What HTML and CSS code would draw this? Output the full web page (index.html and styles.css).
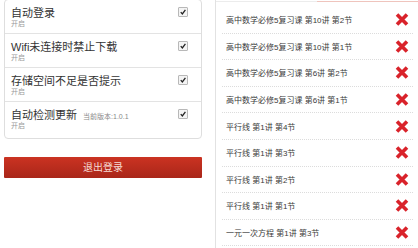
FILE: index.html
```html
<!DOCTYPE html>
<html lang="zh-CN">
<head>
    <meta charset="UTF-8">
    <meta name="viewport" content="width=device-width, initial-scale=1.0">
    <title>设置</title>
    <link rel="stylesheet" href="styles.css">
</head>
<body>

    <div class="page">

        <!-- Einstellungen -->
        <div class="settings">
            <div class="card">
                <div class="row">
                    <div class="row-head">
                        <span class="title">自动登录</span>
                        <span class="check"><svg viewBox="0 0 10 10"><path d="M2.2 5.2 L4.2 7.4 L8 2.4" /></svg></span>
                    </div>
                    <div class="sub">开启</div>
                </div>
                <div class="row">
                    <div class="row-head">
                        <span class="title">Wifi未连接时禁止下载</span>
                        <span class="check"><svg viewBox="0 0 10 10"><path d="M2.2 5.2 L4.2 7.4 L8 2.4" /></svg></span>
                    </div>
                    <div class="sub">开启</div>
                </div>
                <div class="row">
                    <div class="row-head">
                        <span class="title">存储空间不足是否提示</span>
                        <span class="check"><svg viewBox="0 0 10 10"><path d="M2.2 5.2 L4.2 7.4 L8 2.4" /></svg></span>
                    </div>
                    <div class="sub">开启</div>
                </div>
                <div class="row last">
                    <div class="row-head">
                        <span class="title">自动检测更新 <span class="version">当前版本:1.0.1</span></span>
                        <span class="check"><svg viewBox="0 0 10 10"><path d="M2.2 5.2 L4.2 7.4 L8 2.4" /></svg></span>
                    </div>
                    <div class="sub">开启</div>
                </div>
            </div>

            <div class="logout">退出登录</div>
        </div>

        <!-- Download-Liste -->
        <div class="downloads">
            <div class="tabline">
                <span class="tab"></span>
                <span class="tab active"></span>
            </div>
            <ul class="list" id="liste"></ul>
        </div>

    </div>

    <script>
        // Einträge der Liste
        const eintraege = [
            '高中数学必修5复习课 第10讲 第2节',
            '高中数学必修5复习课 第10讲 第1节',
            '高中数学必修5复习课 第6讲 第2节',
            '高中数学必修5复习课 第6讲 第1节',
            '平行线 第1讲 第4节',
            '平行线 第1讲 第3节',
            '平行线 第1讲 第2节',
            '平行线 第1讲 第1节',
            '一元一次方程 第1讲 第3节'
        ];

        const liste = document.getElementById('liste');

        eintraege.forEach(text => {
            liste.innerHTML += `
                <li class="item">
                    <span class="item-text">${text}</span>
                    <svg class="del" viewBox="0 0 16 15"><path d="M3 2.5 L13 12.5 M13 2.5 L3 12.5" /></svg>
                </li>
            `;
        });
    </script>

</body>
</html>
```

FILE: styles.css
```css
body {
    font-family: 'Liberation Sans', 'Noto Sans CJK SC', sans-serif;
    background-color: #ffffff;
    margin: 0;
    padding: 0;
    color: #333;
}
.page {
    display: flex;
    height: 248px;
    overflow: hidden;
}
.settings {
    width: 198px;
    padding: 0 0 0 4px;
    flex-shrink: 0;
}
.card {
    margin-top: -1px;
    border: 1px solid #dedede;
    border-radius: 4px;
    background-color: #fff;
}
.row {
    height: 28px;
    padding: 5px 13px 0 6px;
    border-bottom: 1px solid #e3e3e3;
}
.row.last {
    height: 31px;
    border-bottom: none;
}
.row-head {
    display: flex;
    justify-content: space-between;
    align-items: center;
    height: 14px;
}
.title {
    font-size: 11px;
    color: #333;
}
.version {
    font-size: 7px;
    color: #888;
    margin-left: 3px;
}
.sub {
    font-size: 7px;
    line-height: 10px;
    color: #9a9a9a;
}
.check {
    width: 8px;
    height: 8px;
    border: 1px solid #b8b8b8;
    border-radius: 1px;
    background-color: #f4f4f4;
    display: flex;
}
.check svg {
    width: 8px;
    height: 8px;
    fill: none;
    stroke: #222;
    stroke-width: 1.6;
}
.logout {
    margin-top: 18px;
    height: 21px;
    line-height: 21px;
    text-align: center;
    font-size: 10px;
    color: #f6dcd6;
    background: linear-gradient(#cb3322, #a92619);
    border-radius: 1px;
}
.downloads {
    margin-left: 13px;
    flex: 1;
    border-left: 1px solid #e2e2e2;
}
.tabline {
    display: flex;
    margin-top: 1px;
    height: 1px;
}
.tab {
    flex: 1;
    background-color: #ececec;
}
.tab.active {
    background-color: #efc4bd;
}
.list {
    list-style: none;
    margin: 0;
    padding: 5px 5px 0 6px;
}
.item {
    display: flex;
    justify-content: space-between;
    align-items: center;
    height: 25.6px;
    border-bottom: 1px dotted #dcdcdc;
    padding-left: 4px;
}
.item-text {
    font-size: 8px;
    color: #3a3a3a;
}
.del {
    width: 16px;
    height: 15px;
    margin-right: 3px;
    fill: none;
    stroke: #d9232b;
    stroke-width: 3.6;
}
```
